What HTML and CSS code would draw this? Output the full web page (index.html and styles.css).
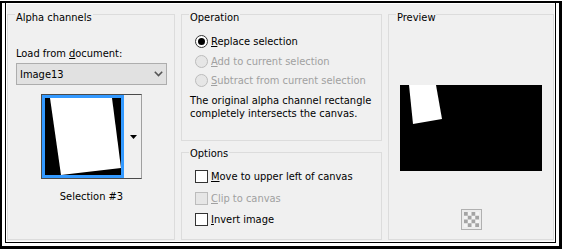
FILE: index.html
```html
<!DOCTYPE html>
<html>
<head>
<meta charset="utf-8">
<link rel="stylesheet" href="styles.css">
</head>
<body>
<div class="frame">
  <div class="panel">
    <div class="inner">
      <section class="group g-alpha">
        <div class="legend">Alpha channels</div>
        <div class="field-label">Load from <u>d</u>ocument:</div>
        <div class="select">
          <span>Image13</span>
          <svg class="chev" width="9" height="6" viewBox="0 0 9 6"><polyline points="0.8,0.8 4.5,4.5 8.2,0.8" fill="none" stroke="#555" stroke-width="1.6"/></svg>
        </div>
        <div class="thumb-wrap">
          <div class="thumb">
            <div class="thumb-sel">
              <svg width="76" height="77" viewBox="0 0 76 77"><rect width="76" height="77" fill="#000"/><polygon points="5,0 67,0 76,70 16,77" fill="#fff"/></svg>
            </div>
            <div class="thumb-drop">
              <svg width="7" height="4" viewBox="0 0 7 4"><polygon points="0,0 7,0 3.5,4" fill="#000"/></svg>
            </div>
          </div>
        </div>
        <div class="caption">Selection #3</div>
      </section>
      <div class="col">
        <section class="group g-op">
          <div class="legend">Operation</div>
          <div class="opt r1"><span class="radio on"><span class="dot"></span></span><span class="lbl"><u>R</u>eplace selection</span></div>
          <div class="opt r2 dis"><span class="radio"></span><span class="lbl"><u>A</u>dd to current selection</span></div>
          <div class="opt r3 dis"><span class="radio"></span><span class="lbl"><u>S</u>ubtract from current selection</span></div>
          <p class="note">The original alpha channel rectangle<br>completely intersects the canvas.</p>
        </section>
        <section class="group g-opt">
          <div class="legend">Options</div>
          <div class="opt c1"><span class="check"></span><span class="lbl"><u>M</u>ove to upper left of canvas</span></div>
          <div class="opt c2 dis"><span class="check"></span><span class="lbl"><u>C</u>lip to canvas</span></div>
          <div class="opt c3"><span class="check"></span><span class="lbl"><u>I</u>nvert image</span></div>
        </section>
      </div>
      <section class="group g-prev">
        <div class="legend">Preview</div>
        <div class="preview">
          <svg width="142" height="86" viewBox="0 0 142 86"><rect width="142" height="86" fill="#000"/><polygon points="9,0 36,0 42,34 13,39" fill="#fff"/></svg>
        </div>
        <div class="bgicon">
          <svg width="21" height="21" viewBox="0 0 21 21">
            <rect x="0.5" y="0.5" width="20" height="20" fill="#ececec" stroke="#b0b0b0"/>
            <rect x="3" y="3" width="15" height="15" fill="#f4f4f4"/>
            <g fill="#a4a4a4">
              <rect x="3" y="3" width="3.75" height="3.75"/><rect x="10.5" y="3" width="3.75" height="3.75"/>
              <rect x="6.75" y="6.75" width="3.75" height="3.75"/><rect x="14.25" y="6.75" width="3.75" height="3.75"/>
              <rect x="3" y="10.5" width="3.75" height="3.75"/><rect x="10.5" y="10.5" width="3.75" height="3.75"/>
              <rect x="6.75" y="14.25" width="3.75" height="3.75"/><rect x="14.25" y="14.25" width="3.75" height="3.75"/>
            </g>
          </svg>
        </div>
      </section>
    </div>
  </div>
</div>
</body>
</html>
```
FILE: styles.css
```css
* { box-sizing: border-box; }
body {
  margin: 0;
  background: #fff;
  font-family: "DejaVu Sans Condensed", "DejaVu Sans", sans-serif;
  font-size: 11px;
  line-height: 13px;
  color: #000;
}
u { text-decoration: underline; text-underline-offset: 1px; }
.frame {
  margin-top: 1px;
  width: 562px;
  height: 248px;
  border-style: solid;
  border-color: #000;
  border-width: 2px 3px 3px 2px;
  padding: 0 3px 3px 3px;
  background: #fff;
}
.panel {
  height: 100%;
  border: 1px solid #000;
  border-top: 0;
}
.inner {
  height: 100%;
  border: 1px solid #fff;
  background: #f0f0f0;
  display: flex;
  gap: 6px;
  padding-top: 10px;
  padding-bottom: 1px;
}
.group {
  border: 1px solid #dcdcdc;
  padding: 0 7px 0 8px;
}
.legend {
  width: max-content;
  margin: -4px 0 0 -1px;
  padding: 0 1px;
  background: #f0f0f0;
}
.g-alpha { width: 168px; }
.field-label { margin-top: 23px; }
.select {
  margin-top: 3px;
  height: 22px;
  border: 1px solid #adadad;
  background: #e1e1e1;
  display: flex;
  align-items: center;
  padding: 0 3px 0 3px;
}
.chev { margin-left: auto; }
.thumb-wrap {
  margin-top: 9px;
  display: flex;
  justify-content: center;
}
.thumb {
  display: flex;
  border: 1px solid #4a4a4a;
  border-right-color: #a0a0a0;
}
.thumb-sel {
  border: 3px solid #3399ff;
  display: flex;
}
.thumb-sel svg, .preview svg, .bgicon svg { display: block; }
.thumb-drop {
  width: 17px;
  background: #f0f0f0;
  display: flex;
  align-items: center;
  justify-content: center;
  padding-left: 1px;
}
.thumb-drop svg { display: block; }
.caption {
  margin-top: 11px;
  text-align: center;
}
.col {
  width: 201px;
  display: flex;
  flex-direction: column;
}
.g-op { height: 127px; }
.g-opt { flex: 1; margin-top: 11px; }
.g-opt .legend { margin-top: -6px; }
.opt {
  display: flex;
  align-items: center;
  height: 13px;
  padding-left: 5px;
}
.opt .lbl { margin-left: 3px; }
.dis .lbl { color: #a0a0a0; }
.r1 { margin-top: 11px; }
.r2 { margin-top: 7px; }
.r3 { margin-top: 6px; }
.radio {
  width: 13px;
  height: 13px;
  border-radius: 50%;
  border: 1px solid #bcbcbc;
  background: #e6e6e6;
  display: flex;
  align-items: center;
  justify-content: center;
  flex: none;
}
.radio.on { border-color: #333; background: #fff; }
.radio .dot {
  width: 7px;
  height: 7px;
  border-radius: 50%;
  background: #000;
}
.note { margin: 7px 0 0 0; }
.check {
  width: 13px;
  height: 13px;
  border: 1px solid #333;
  background: #fff;
  flex: none;
}
.dis .check { border-color: #bcbcbc; background: #e6e6e6; }
.c1 { margin-top: 10px; }
.c2 { margin-top: 9px; }
.c3 { margin-top: 8px; }
.g-prev {
  width: 166px;
  padding: 0;
  display: flex;
  flex-direction: column;
  align-items: center;
}
.g-prev .legend { align-self: flex-start; margin-left: 7px; }
.preview { margin-top: 61px; }
.bgicon { margin-top: 38px; }
```
